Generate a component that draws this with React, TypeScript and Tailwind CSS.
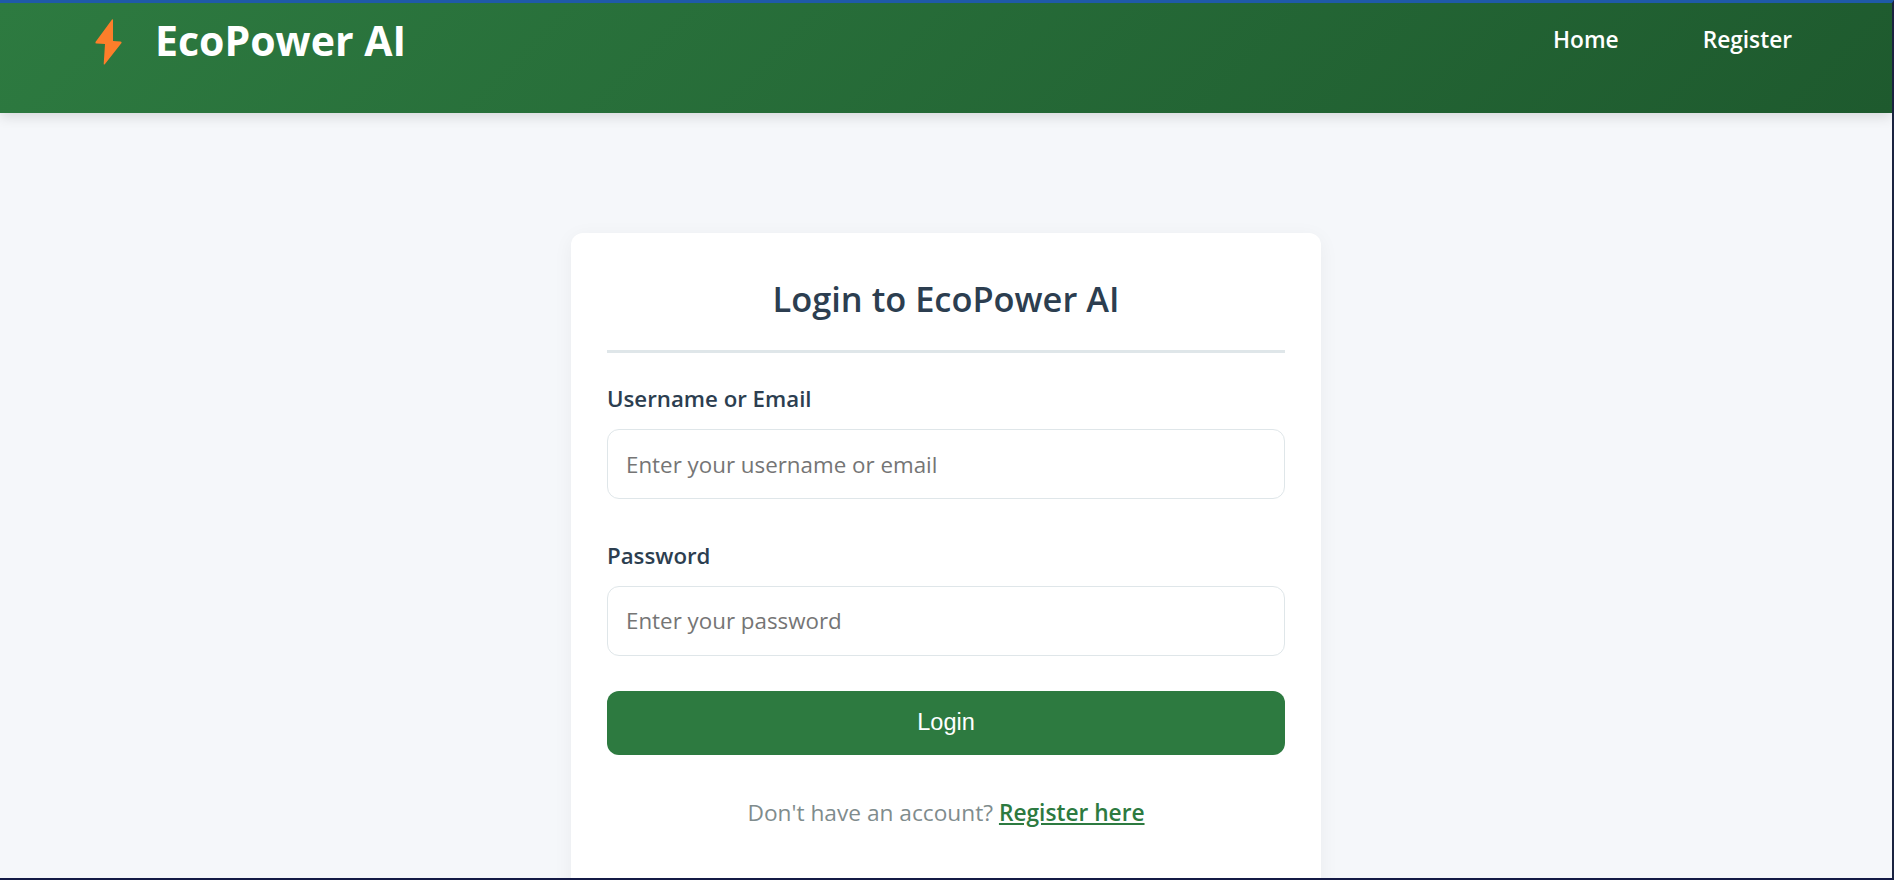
const uiFont = "font-['Open_Sans','Noto_Sans',sans-serif]";

function Field({ label, placeholder, type }: { label: string; placeholder: string; type: string }) {
  return (
    <div className="mb-[35.5px]">
      <label className="block mb-[10px] text-[22.25px] leading-[41px] font-semibold text-[#2c3e50]">{label}</label>
      <input
        type={type}
        placeholder={placeholder}
        className="block w-full h-[70px] px-[18px] bg-white border border-[#dfe6e9] rounded-[12px] text-[22.35px] outline-none placeholder:text-[#757575]"
      />
    </div>
  );
}

export default function App() {
  return (
    <div className={`h-[880px] overflow-hidden bg-[#f5f7fa] border-t-[3px] border-t-[#1f5aa8] border-r-[2px] border-r-[#1a2340] border-b-[2px] border-b-[#141a45] ${uiFont}`}>
      <header className="h-[110px] bg-[linear-gradient(135deg,#2d7a40,#1e5a2e)] shadow-[0_4px_12px_rgba(0,0,0,0.12)] flex items-start justify-between pl-[95px] pr-[100px]">
        <div className="flex items-start gap-[33px] pt-[10px]">
          <svg width="27" height="46" viewBox="0 0 27 46" className="mt-[6px] fill-[#fd7e2a]">
            <path d="M17 0.5 L0.5 23 Q0 24.5 1.5 24.5 L10 25 L8.7 45 Q9 46 10 45 L26.5 24 Q27 22.5 25.5 22.5 L18 22 L18 1 Q18 0 17 0.5 Z" />
          </svg>
          <span className="text-[41px] leading-[54px] font-bold text-white">EcoPower AI</span>
        </div>
        <nav className="flex gap-[84px] pt-[22px] text-[22.7px] leading-[30px] font-semibold text-white">
          <a>Home</a>
          <a>Register</a>
        </nav>
      </header>
      <main className="flex justify-center pt-[120px]">
        <div className="w-[750px] h-[700px] shrink-0 bg-white rounded-[12px] shadow-[0_4px_20px_rgba(0,0,0,0.05)] px-[36px] pt-[44px]">
          <h2 className="pb-[29px] mb-[25px] border-b-[3px] border-b-[#dfe6e9] text-center text-[34.4px] leading-[44px] font-semibold text-[#2c3e50]">
            Login to EcoPower AI
          </h2>
          <Field label="Username or Email" placeholder="Enter your username or email" type="text" />
          <Field label="Password" placeholder="Enter your password" type="password" />
          <button className="block w-full h-[64px] rounded-[12px] bg-[#2d7a40] text-white text-[23.5px] font-['Liberation_Sans',sans-serif]">
            Login
          </button>
          <p className="mt-[43px] text-center text-[22.7px] leading-[30px] text-[#7f8c8d]">
            Don't have an account?{" "}
            <a className="font-semibold text-[#2d7a40] underline">Register here</a>
          </p>
        </div>
      </main>
    </div>
  );
}
